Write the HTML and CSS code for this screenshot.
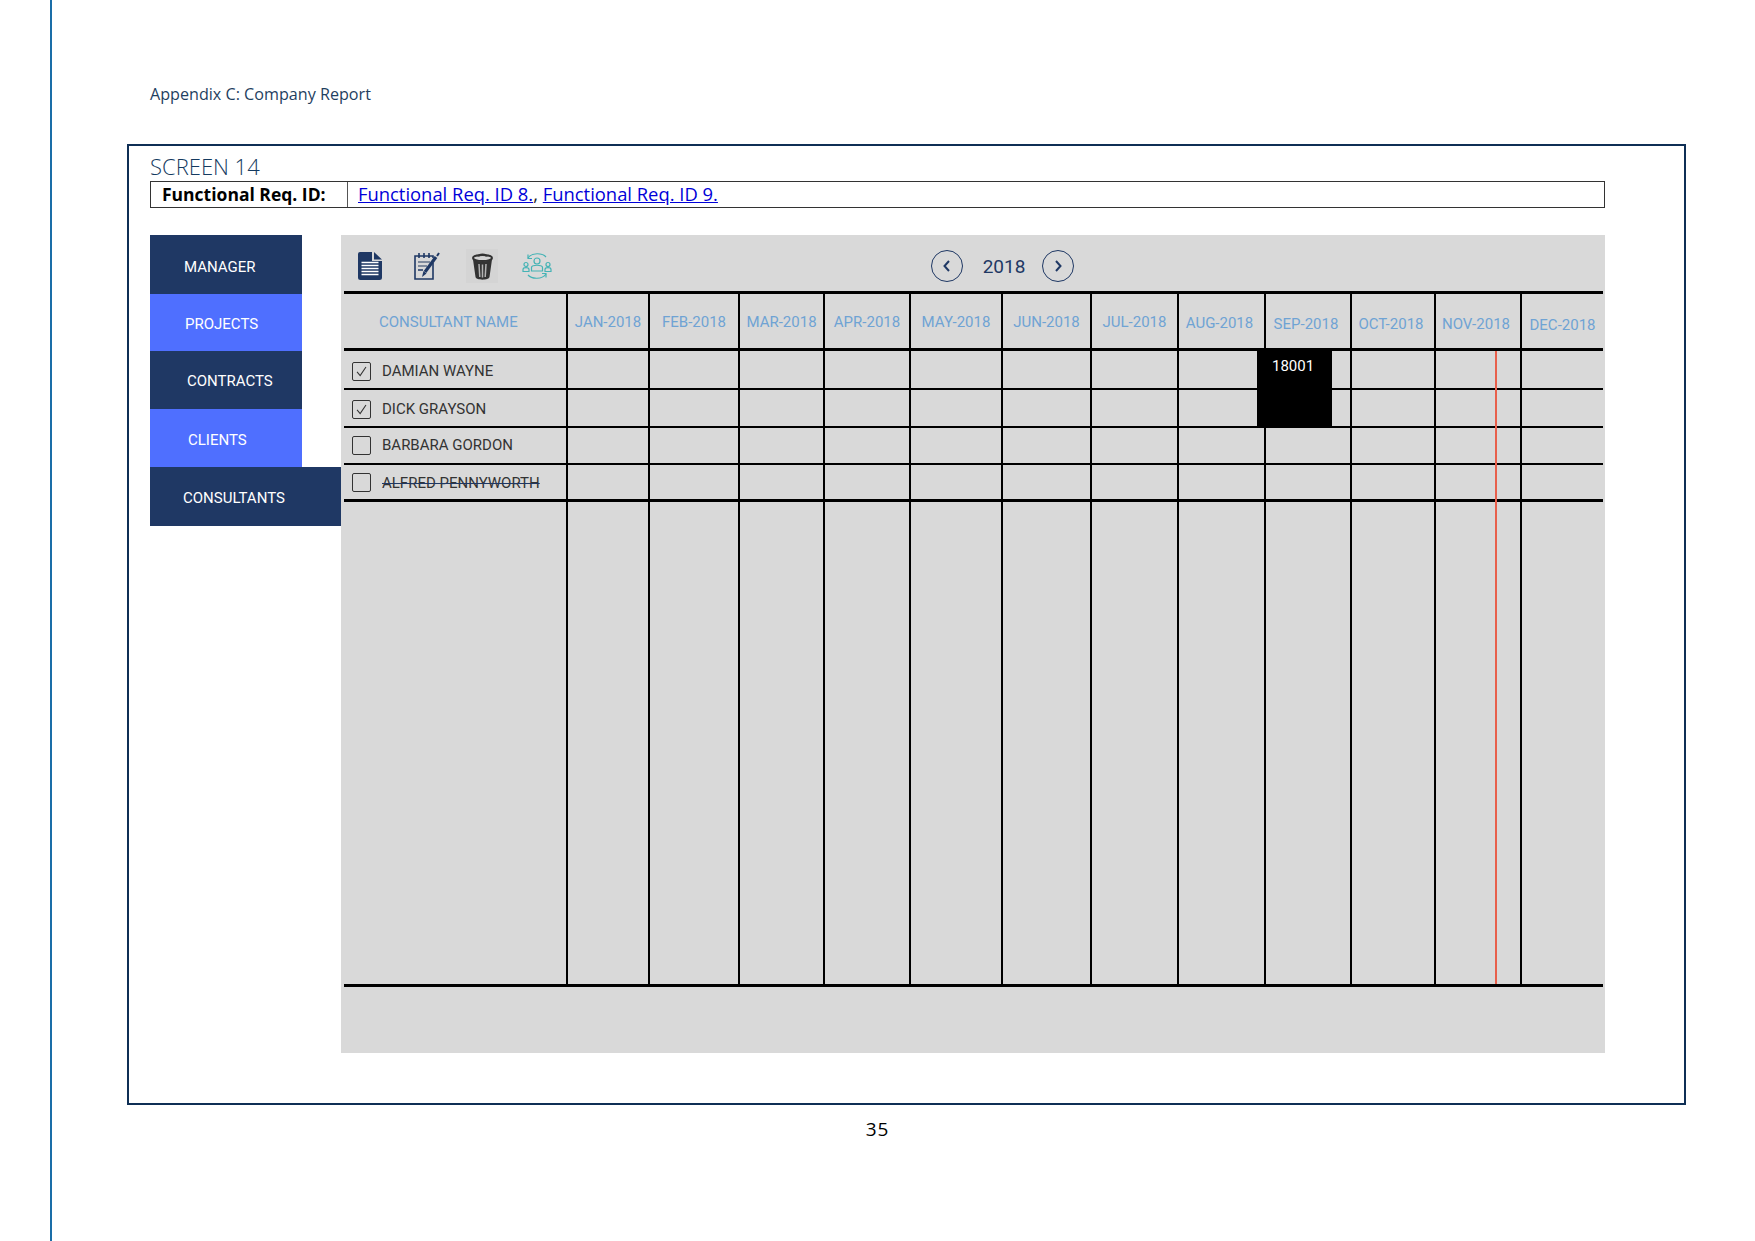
FILE: index.html
```html
<!DOCTYPE html>
<html lang="en">
<head>
    <meta charset="UTF-8">
    <title>Appendix C: Company Report</title>
    <link rel="stylesheet" href="styles.css">
</head>
<body>
    <div class="page">
        <p class="running-head">Appendix C: Company Report</p>

        <section class="frame">
            <h2 class="screen-title">SCREEN 14</h2>
            <div class="req-row">
                <div class="req-label">Functional Req. ID:</div>
                <div class="req-links"><a href="#req8">Functional Req. ID 8.</a>, <a href="#req9">Functional Req. ID 9.</a></div>
            </div>

            <div class="app">
                <nav class="side-nav">
                    <a class="nav-item nav-manager" href="#manager">MANAGER</a>
                    <a class="nav-item nav-alt nav-projects" href="#projects">PROJECTS</a>
                    <a class="nav-item nav-contracts" href="#contracts">CONTRACTS</a>
                    <a class="nav-item nav-alt nav-clients" href="#clients">CLIENTS</a>
                    <a class="nav-item nav-consultants" href="#consultants">CONSULTANTS</a>
                </nav>

                <div class="panel">
                    <div class="toolbar">
                        <svg class="icon icon-doc" viewBox="0 0 24 28" aria-label="New">
                            <path fill="#1f3864" d="M2 0H14V9H24V25.5A2.500 2.500 0 0 1 21.500 28H2.500A2.500 2.500 0 0 1 0 25.500V2A2 2 0 0 1 2 0Z"/>
                            <path fill="#1f3864" d="M16 0L24 7.500H16Z"/>
                            <path stroke="#fff" stroke-width="1.300" d="M3.500 10.500H20.500M3.500 13.500H20.500M3.500 16.500H20.500M3.500 19.500H20.500M3.500 22.500H20.500"/>
                        </svg>
                        <svg class="icon icon-note" viewBox="0 0 26 28" fill="none" aria-label="Edit">
                            <path stroke="#1f3864" stroke-width="1.600" d="M19 11V27H1V4H19V6"/>
                            <path stroke="#1f3864" stroke-width="1.600" d="M5 1V6M10 1V6M15 1V6"/>
                            <path stroke="#7f8a9c" stroke-width="2" d="M4 10H16M4 14H13"/>
                            <path stroke="#1f3864" stroke-width="1.500" d="M4 18H9"/>
                            <path stroke="#1f3864" stroke-width="3.200" d="M11 20L22 5"/>
                            <path fill="#1f3864" d="M8 25L9.500 19L12.500 21.500Z"/>
                            <path stroke="#1f3864" stroke-width="2" d="M23 4L25 1"/>
                        </svg>
                        <div class="trash-box">
                            <svg class="icon-trash" viewBox="0 0 21 27" aria-label="Delete">
                                <path fill="none" stroke="#333" stroke-width="2" d="M6.500 3.500C6.500 0.800 14.500 0.800 14.500 3.500"/>
                                <ellipse cx="10.500" cy="5" rx="9.500" ry="3" fill="none" stroke="#333" stroke-width="2"/>
                                <path fill="#333" d="M1 6.500C5 9 16 9 20 6.500L17.500 24C17 27.500 4 27.500 3.500 24Z"/>
                                <path stroke="#b4b4b4" stroke-width="1.500" d="M7 11L7.800 24M10.500 11.500V24.500M14 11L13.200 24"/>
                            </svg>
                        </div>
                        <svg class="icon icon-team" viewBox="0 0 30 28" fill="none" stroke="#45b3b5" stroke-width="1.200" aria-label="Consultants">
                            <path d="M6 6C10 0.500 20 0.500 24 5"/>
                            <path d="M6 2.500V6.500H10"/>
                            <path d="M24 22C20 27.500 10 27.500 6 23"/>
                            <path d="M24 25.500V21.500H20"/>
                            <circle cx="15" cy="9" r="3"/>
                            <path d="M9.500 19V15.500C9.500 12.500 20.500 12.500 20.500 15.500V19Z"/>
                            <circle cx="4" cy="12.500" r="2"/>
                            <path d="M1 19.500V17.500C1 15 7 15 7 17.500V19.500Z"/>
                            <circle cx="26" cy="12.500" r="2"/>
                            <path d="M23 19.500V17.500C23 15 29 15 29 17.500V19.500Z"/>
                        </svg>

                        <div class="year-nav">
                            <button class="round-btn" aria-label="Previous year">
                                <svg viewBox="0 0 10 14" fill="none" stroke="#1f3864" stroke-width="2"><path d="M7 2L2.500 7L7 12"/></svg>
                            </button>
                            <span class="year">2018</span>
                            <button class="round-btn" aria-label="Next year">
                                <svg viewBox="0 0 10 14" fill="none" stroke="#1f3864" stroke-width="2"><path d="M3 2L7.500 7L3 12"/></svg>
                            </button>
                        </div>
                    </div>

                    <div class="gantt">
                        <table class="gantt-table">
                            <colgroup>
                                <col class="c-name">
                                <col class="c-82"><col class="c-90"><col class="c-85"><col class="c-86">
                                <col class="c-92"><col class="c-89"><col class="c-87"><col class="c-87">
                                <col class="c-86"><col class="c-84"><col class="c-86"><col class="c-83">
                            </colgroup>
                            <thead>
                                <tr>
                                    <th class="name-head">CONSULTANT NAME</th>
                                    <th>JAN-2018</th><th>FEB-2018</th><th>MAR-2018</th><th>APR-2018</th>
                                    <th>MAY-2018</th><th>JUN-2018</th><th>JUL-2018</th>
                                    <th class="low-1">AUG-2018</th>
                                    <th class="low-2">SEP-2018</th><th class="low-2">OCT-2018</th><th class="low-2">NOV-2018</th>
                                    <th class="low-3">DEC-2018</th>
                                </tr>
                            </thead>
                            <tbody>
                                <tr class="row-a">
                                    <td class="name-cell"><span class="check"><svg viewBox="0 0 19 19" fill="none" stroke="#333" stroke-width="1.200"><path d="M4.500 10L8 14L14.500 4.500"/></svg></span>DAMIAN WAYNE</td>
                                    <td></td><td></td><td></td><td></td><td></td><td></td><td></td><td></td><td></td><td></td><td></td><td></td>
                                </tr>
                                <tr class="row-b">
                                    <td class="name-cell"><span class="check"><svg viewBox="0 0 19 19" fill="none" stroke="#333" stroke-width="1.200"><path d="M4.500 10L8 14L14.500 4.500"/></svg></span>DICK GRAYSON</td>
                                    <td></td><td></td><td></td><td></td><td></td><td></td><td></td><td></td><td></td><td></td><td></td><td></td>
                                </tr>
                                <tr class="row-c">
                                    <td class="name-cell"><span class="check"></span>BARBARA GORDON</td>
                                    <td></td><td></td><td></td><td></td><td></td><td></td><td></td><td></td><td></td><td></td><td></td><td></td>
                                </tr>
                                <tr class="row-d">
                                    <td class="name-cell"><span class="check"></span><s class="struck">ALFRED PENNYWORTH</s></td>
                                    <td></td><td></td><td></td><td></td><td></td><td></td><td></td><td></td><td></td><td></td><td></td><td></td>
                                </tr>
                                <tr class="row-rest">
                                    <td></td><td></td><td></td><td></td><td></td><td></td><td></td><td></td><td></td><td></td><td></td><td></td><td></td>
                                </tr>
                            </tbody>
                        </table>
                        <div class="booking">18001</div>
                        <div class="today-line"></div>
                    </div>
                </div>
            </div>
        </section>

        <p class="page-number">35</p>
    </div>
</body>
</html>
```

FILE: styles.css
```css
body {
    margin: 0;
    background-color: #ffffff;
    font-family: "Open Sans", sans-serif;
}

.page {
    box-sizing: border-box;
    width: 1705px;
    height: 1241px;
    margin-left: 50px;
    padding-top: 83px;
    border-left: 2px solid #1a6ea8;
    overflow: hidden;
}

.running-head {
    margin: 0 0 0 98px;
    height: 61px;
    font-size: 16.15px;
    line-height: 22px;
    color: #1f3f5f;
}

.frame {
    box-sizing: border-box;
    width: 1559px;
    height: 961px;
    margin-left: 75px;
    padding: 7px 0 0 21px;
    border: 2px solid #0f2f55;
}

.screen-title {
    margin: 0;
    height: 28px;
    font-size: 22px;
    font-weight: 300;
    line-height: 26px;
    color: #143a60;
}

/* requirement links row */
.req-row {
    display: flex;
    box-sizing: border-box;
    width: 1455px;
    height: 27px;
    border: 1px solid #333333;
    line-height: 24px;
}

.req-label {
    box-sizing: border-box;
    width: 197px;
    padding-left: 11px;
    border-right: 1px solid #555555;
    font-size: 17.5px;
    font-weight: 700;
    color: #000000;
}

.req-links {
    padding-left: 10px;
    font-size: 18.4px;
    color: #222222;
}

.req-links a {
    color: #0000d8;
}

.app {
    display: flex;
    margin-top: 27px;
}

.side-nav {
    display: flex;
    flex-direction: column;
    width: 191px;
    flex-shrink: 0;
}

.nav-item {
    box-sizing: border-box;
    width: 152px;
    height: 58px;
    background-color: #1f3864;
    color: #ffffff;
    font-family: "Roboto", sans-serif;
    font-size: 15px;
    line-height: 54px;
    text-decoration: none;
}

.nav-alt {
    background-color: #4f6fff;
}

.nav-manager {
    height: 59px;
    padding: 5px 0 0 34px;
}

.nav-projects {
    height: 57px;
    padding: 3px 0 0 35px;
}

.nav-contracts {
    padding: 3px 0 0 37px;
}

.nav-clients {
    padding: 4px 0 0 38px;
}

.nav-consultants {
    width: 191px;
    height: 59px;
    padding: 4px 0 0 33px;
}

.panel {
    box-sizing: border-box;
    width: 1264px;
    height: 818px;
    padding: 0 2px 0 3px;
    background-color: #d9d9d9;
}

.toolbar {
    display: flex;
    align-items: center;
    box-sizing: border-box;
    height: 56px;
    padding: 6px 0 0 14px;
}

.icon {
    flex-shrink: 0;
    height: 28px;
}

.icon-doc {
    width: 24px;
    margin-right: 32px;
}

.icon-note {
    width: 26px;
    margin-right: 26px;
}

.trash-box {
    display: flex;
    align-items: center;
    justify-content: center;
    width: 32px;
    height: 34px;
    margin-right: 24px;
    background-color: #d4d4d4;
}

.icon-trash {
    width: 21px;
    height: 27px;
}

.icon-team {
    width: 30px;
}

.year-nav {
    display: flex;
    align-items: center;
    margin-left: 379px;
}

.round-btn {
    display: flex;
    align-items: center;
    justify-content: center;
    box-sizing: border-box;
    width: 32px;
    height: 32px;
    padding: 0;
    border: 1px solid #1f3864;
    border-radius: 50%;
    background: none;
}

.round-btn svg {
    width: 10px;
    height: 14px;
}

.year {
    width: 79px;
    padding-left: 3px;
    box-sizing: border-box;
    color: #1f3864;
    font-family: "Roboto", sans-serif;
    font-size: 19px;
    text-align: center;
}

.gantt {
    position: relative;
    width: 1259px;
}

.gantt-table {
    width: 1259px;
    table-layout: fixed;
    border-collapse: separate;
    border-spacing: 0;
    font-family: "Roboto", sans-serif;
}

.c-name { width: 222px; }
.c-82 { width: 82px; }
.c-83 { width: 83px; }
.c-84 { width: 84px; }
.c-85 { width: 85px; }
.c-86 { width: 86px; }
.c-87 { width: 87px; }
.c-89 { width: 89px; }
.c-90 { width: 90px; }
.c-92 { width: 92px; }

.gantt-table th,
.gantt-table td {
    box-sizing: border-box;
    padding: 0;
    border-left: 2px solid #000000;
    border-bottom: 2px solid #000000;
}

.gantt-table th:first-child,
.gantt-table td:first-child {
    border-left: none;
}

.gantt-table th {
    height: 60px;
    padding-top: 2px;
    border-top: 3px solid #000000;
    border-bottom-width: 3px;
    color: #6fa3d4;
    font-size: 15px;
    font-weight: 400;
    white-space: nowrap;
}

.gantt-table th.name-head {
    padding: 2px 0 0 35px;
    text-align: left;
}

.gantt-table th.low-1 { padding: 4px 4px 0 0; }
.gantt-table th.low-2 { padding: 6px 4px 0 0; }
.gantt-table th.low-3 { padding-top: 7px; }

.row-a td { height: 39px; }
.row-b td { height: 38px; }
.row-c td { height: 37px; }

.gantt-table .row-d td {
    height: 37px;
    border-bottom-width: 3px;
}

.gantt-table .row-rest td {
    height: 485px;
    border-bottom-width: 3px;
}

.gantt-table td.name-cell {
    padding-left: 8px;
    color: #333333;
    font-size: 15px;
    white-space: nowrap;
}

.gantt-table .row-a td.name-cell { padding-top: 4px; }
.gantt-table .row-b td.name-cell { padding-top: 3px; }

.check {
    display: inline-block;
    box-sizing: border-box;
    width: 19px;
    height: 19px;
    margin-right: 11px;
    border: 1px solid #333333;
    border-radius: 2px;
    vertical-align: middle;
}

.check svg {
    display: block;
    width: 17px;
    height: 17px;
}

.struck {
    vertical-align: -2px;
    color: #333333;
    text-decoration-color: #1f3864;
}

.booking {
    position: absolute;
    left: 913px;
    top: 57px;
    box-sizing: border-box;
    width: 75px;
    height: 78px;
    padding: 9px 0 0 15px;
    background-color: #000000;
    color: #ffffff;
    font-family: "Roboto", sans-serif;
    font-size: 15px;
}

.today-line {
    position: absolute;
    left: 1151px;
    top: 60px;
    bottom: 3px;
    width: 2px;
    background-color: #e8604c;
}

.page-number {
    margin: 11px 0 0 0;
    padding-right: 52px;
    font-size: 19px;
    letter-spacing: 1px;
    text-align: center;
    color: #000000;
}
```
